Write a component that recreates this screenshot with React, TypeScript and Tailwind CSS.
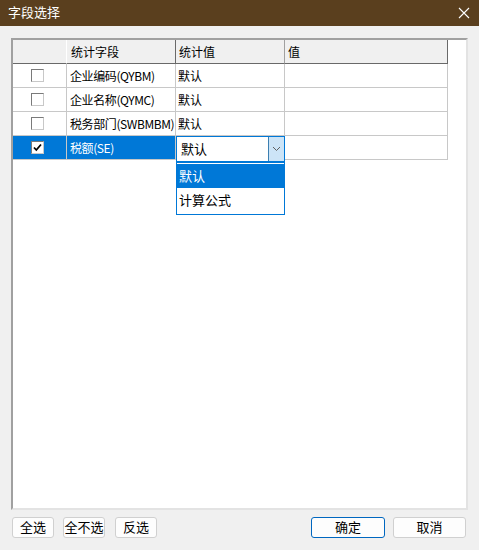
import React from 'react';

const FONT = { fontFamily: '"Liberation Sans", "Noto Sans CJK SC", sans-serif' };
const CJK = { fontFamily: '"Noto Sans CJK SC", "Liberation Sans", sans-serif' };

const rows = [
    { field: '企业编码(QYBM)', value: '默认', checked: false },
    { field: '企业名称(QYMC)', value: '默认', checked: false },
    { field: '税务部门(SWBMBM)', value: '默认', checked: false },
    { field: '税额(SE)', value: '默认', checked: true },
];

function CheckBox({ checked }: { checked: boolean }) {
    return (
        <div className="w-[13px] h-[13px] bg-white border border-[#7a7a7a] border-r-[#c8c8c8] border-b-[#c8c8c8] flex items-center justify-center">
            {checked && (
                <svg width="9" height="9" viewBox="0 0 9 9">
                    <path d="M1 4.5 L3.3 7 L8 1.5" stroke="#000" strokeWidth="1.8" fill="none" />
                </svg>
            )}
        </div>
    );
}

function Btn({ label, w, primary }: { label: string; w: string; primary?: boolean }) {
    return (
        <button
            className={`${w} h-[21px] rounded-[3px] bg-[#fdfdfd] text-[13px] text-black flex items-center justify-center border ${primary ? 'border-[#0067c0]' : 'border-[#d0d0d0]'}`}
        >
            {label}
        </button>
    );
}

export default function App() {
    return (
        <div className="w-[479px] h-[550px] bg-[#f0f0f0] flex flex-col overflow-hidden" style={FONT}>
            {/* title bar */}
            <div className="h-[26px] bg-[#5a3f1e] flex items-center justify-between pl-[8px] pr-[9px] text-white text-[13px]">
                <span>字段选择</span>
                <svg width="12" height="12" viewBox="0 0 12 12">
                    <path d="M1 1 L11 11 M11 1 L1 11" stroke="#fff" strokeWidth="1.1" />
                </svg>
            </div>

            <div className="pl-[11px] pr-[11px] pt-[12px] flex flex-col">
                {/* grid */}
                <div className="h-[472px] bg-white border-2 border-t-[#a0a0a0] border-l-[#a0a0a0] border-r-[#e3e3e3] border-b-[#e3e3e3]">
                    <div className="relative grid grid-cols-[54px_109px_109px_163px] text-[12px] text-black" style={CJK}>
                        {/* header */}
                        <div className="h-[24px] bg-[#f0f0f0] border-r border-b border-r-[#ffffff] border-b-[#696969]" />
                        <div className="h-[24px] bg-[#f0f0f0] border-r border-b border-r-[#696969] border-b-[#696969] flex items-center pl-[4px]">统计字段</div>
                        <div className="h-[24px] bg-[#f0f0f0] border-r border-b border-r-[#a0a0a0] border-b-[#696969] flex items-center pl-[3px]">统计值</div>
                        <div className="h-[24px] bg-[#f0f0f0] border-r border-b border-r-[#696969] border-b-[#696969] flex items-center pl-[3px]">值</div>

                        {rows.map((r, i) => {
                            const sel = i === 3;
                            return (
                                <React.Fragment key={i}>
                                    <div className={`h-[24px] border-r border-b border-[#c8c8c8] flex items-center pl-[18px] ${sel ? 'bg-[#0078d7]' : ''}`}>
                                        <CheckBox checked={r.checked} />
                                    </div>
                                    <div className={`h-[24px] border-r border-b border-[#c8c8c8] flex items-center pl-[3px] whitespace-nowrap tracking-[-0.4px] ${sel ? 'bg-[#0078d7] text-white' : ''}`}>
                                        {r.field}
                                    </div>
                                    {sel ? (
                                        <div className="h-[24px] relative">
                                            <div className="absolute left-0 top-0 w-[109px] h-[26px] bg-white border border-[#0078d7] flex items-center z-10">
                                                <span className="pl-[4px] flex-1 text-[13px]">{r.value}</span>
                                                <div className="w-[16px] h-full bg-[#cce4f7] border-l border-[#3c7fb1] flex items-center justify-center">
                                                    <svg width="9" height="6" viewBox="0 0 9 6">
                                                        <path d="M1 1 L4.5 4.5 L8 1" stroke="#606060" strokeWidth="1" fill="none" />
                                                    </svg>
                                                </div>
                                            </div>
                                            <div className="absolute left-0 top-[26px] w-[109px] h-[53px] bg-white border border-[#0078d7] z-10 flex flex-col pt-[1px] text-[13px]">
                                                <div className="h-[24px] bg-[#0078d7] text-white flex items-center pl-[2px]">默认</div>
                                                <div className="h-[24px] flex items-center pl-[2px]">计算公式</div>
                                            </div>
                                        </div>
                                    ) : (
                                        <div className="h-[24px] border-r border-b border-[#c8c8c8] flex items-center pl-[2px]">{r.value}</div>
                                    )}
                                    <div className="h-[24px] border-r border-b border-[#c8c8c8]" />
                                </React.Fragment>
                            );
                        })}
                    </div>
                </div>

                {/* buttons */}
                <div className="flex items-center mt-[7px] pl-[1px]">
                    <Btn label="全选" w="w-[42px]" />
                    <div className="w-[9px]" />
                    <Btn label="全不选" w="w-[42px]" />
                    <div className="w-[10px]" />
                    <Btn label="反选" w="w-[42px]" />
                    <div className="flex-1" />
                    <Btn label="确定" w="w-[74px]" primary />
                    <div className="w-[8px]" />
                    <Btn label="取消" w="w-[73px]" />
                    <div className="w-[2px]" />
                </div>
            </div>
        </div>
    );
}
